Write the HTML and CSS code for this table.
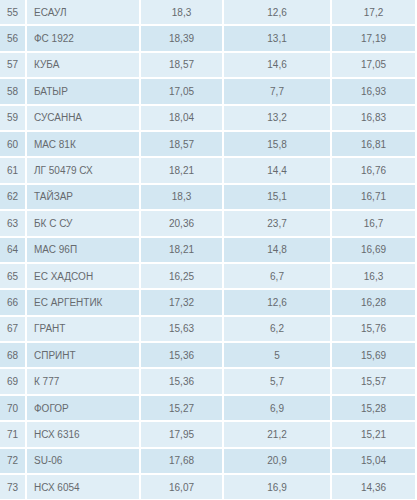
FILE: index.html
```html
<!DOCTYPE html>
<html lang="ru">
<head>
<meta charset="utf-8">
<link rel="stylesheet" href="styles.css">
</head>
<body>
<div class="table">
  <div class="row odd"><div class="c num">55</div><div class="c name">ЕСАУЛ</div><div class="c">18,3</div><div class="c">12,6</div><div class="c">17,2</div></div>
  <div class="row even"><div class="c num">56</div><div class="c name">ФС 1922</div><div class="c">18,39</div><div class="c">13,1</div><div class="c">17,19</div></div>
  <div class="row odd"><div class="c num">57</div><div class="c name">КУБА</div><div class="c">18,57</div><div class="c">14,6</div><div class="c">17,05</div></div>
  <div class="row even"><div class="c num">58</div><div class="c name">БАТЫР</div><div class="c">17,05</div><div class="c">7,7</div><div class="c">16,93</div></div>
  <div class="row odd"><div class="c num">59</div><div class="c name">СУСАННА</div><div class="c">18,04</div><div class="c">13,2</div><div class="c">16,83</div></div>
  <div class="row even"><div class="c num">60</div><div class="c name">МАС 81К</div><div class="c">18,57</div><div class="c">15,8</div><div class="c">16,81</div></div>
  <div class="row odd"><div class="c num">61</div><div class="c name">ЛГ 50479 СХ</div><div class="c">18,21</div><div class="c">14,4</div><div class="c">16,76</div></div>
  <div class="row even"><div class="c num">62</div><div class="c name">ТАЙЗАР</div><div class="c">18,3</div><div class="c">15,1</div><div class="c">16,71</div></div>
  <div class="row odd"><div class="c num">63</div><div class="c name">БК С СУ</div><div class="c">20,36</div><div class="c">23,7</div><div class="c">16,7</div></div>
  <div class="row even"><div class="c num">64</div><div class="c name">МАС 96П</div><div class="c">18,21</div><div class="c">14,8</div><div class="c">16,69</div></div>
  <div class="row odd"><div class="c num">65</div><div class="c name">ЕС ХАДСОН</div><div class="c">16,25</div><div class="c">6,7</div><div class="c">16,3</div></div>
  <div class="row even"><div class="c num">66</div><div class="c name">ЕС АРГЕНТИК</div><div class="c">17,32</div><div class="c">12,6</div><div class="c">16,28</div></div>
  <div class="row odd"><div class="c num">67</div><div class="c name">ГРАНТ</div><div class="c">15,63</div><div class="c">6,2</div><div class="c">15,76</div></div>
  <div class="row even"><div class="c num">68</div><div class="c name">СПРИНТ</div><div class="c">15,36</div><div class="c">5</div><div class="c">15,69</div></div>
  <div class="row odd"><div class="c num">69</div><div class="c name">К 777</div><div class="c">15,36</div><div class="c">5,7</div><div class="c">15,57</div></div>
  <div class="row even"><div class="c num">70</div><div class="c name">ФОГОР</div><div class="c">15,27</div><div class="c">6,9</div><div class="c">15,28</div></div>
  <div class="row odd"><div class="c num">71</div><div class="c name">НСХ 6316</div><div class="c">17,95</div><div class="c">21,2</div><div class="c">15,21</div></div>
  <div class="row even"><div class="c num">72</div><div class="c name">SU-06</div><div class="c">17,68</div><div class="c">20,9</div><div class="c">15,04</div></div>
  <div class="row odd"><div class="c num">73</div><div class="c name">НСХ 6054</div><div class="c">16,07</div><div class="c">16,9</div><div class="c">14,36</div></div>
</div>
</body>
</html>
```

FILE: styles.css
```css
html, body {
  margin: 0;
  padding: 0;
  background: #ffffff;
}
body {
  font-family: "Liberation Sans", Arial, sans-serif;
  font-size: 10px;
  color: #666a6e;
  overflow: hidden;
}
.table {
  display: flex;
  flex-direction: column;
  gap: 2px;
  width: 417px;
}
.row {
  display: grid;
  grid-template-columns: 25px 112px 81px 106px 83px;
  column-gap: 2px;
  height: 24.4px;
}
.c {
  display: flex;
  align-items: center;
  justify-content: center;
  white-space: nowrap;
}
.c.name {
  justify-content: flex-start;
  padding-left: 7px;
}
.odd .c {
  background: #e0eef6;
}
.even .c {
  background: #d3e7f2;
}
```
